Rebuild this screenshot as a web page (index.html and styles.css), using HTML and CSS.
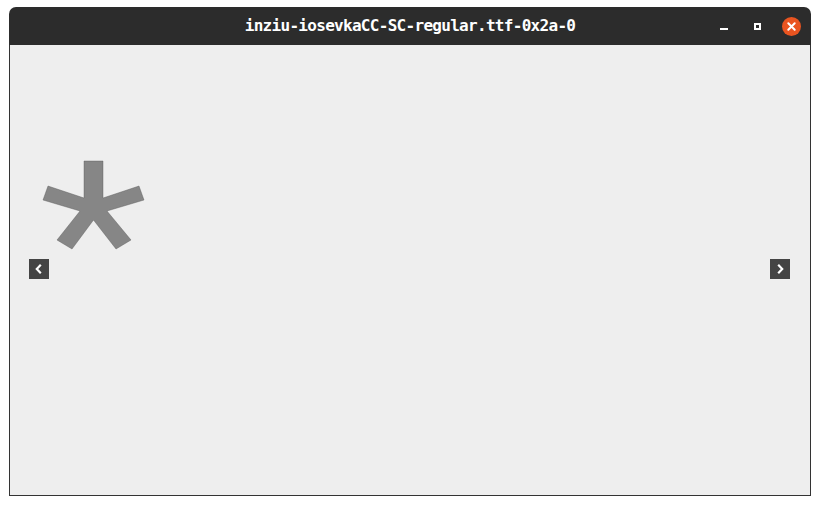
FILE: index.html
```html
<!DOCTYPE html>
<html>
<head>
<meta charset="utf-8">
<link rel="stylesheet" href="styles.css">
</head>
<body>
<div class="window">
  <div class="titlebar">
    <div class="title">inziu-iosevkaCC-SC-regular.ttf-0x2a-0</div>
    <div class="controls">
      <span class="btn-min"></span>
      <span class="btn-max"></span>
      <span class="btn-close">
        <svg width="19" height="19" viewBox="0 0 19 19"><circle cx="9.5" cy="9.5" r="9.5" fill="#e95420"/><path d="M6.3 6.3 L12.7 12.7 M12.7 6.3 L6.3 12.7" stroke="#fff" stroke-width="2" stroke-linecap="round"/></svg>
      </span>
    </div>
  </div>
  <div class="content">
    <svg class="glyph" width="800" height="450" viewBox="10 45 800 450">
      <polygon fill="#868686" stroke="#555" stroke-width="0.4" points="84,161 103,161 103,198 139,186 144,200 107,211 131,240 116,249 93.5,220 72,249 57,240 80,211 43,200 48,186 84,198"/>
    </svg>
    <button class="nav">
      <svg width="20" height="20" viewBox="0 0 20 20"><path d="M11.8 5.8 L7.8 10 L11.8 14.2" fill="none" stroke="#fff" stroke-width="2.2"/></svg>
    </button>
    <button class="nav">
      <svg width="20" height="20" viewBox="0 0 20 20"><path d="M8.2 5.8 L12.2 10 L8.2 14.2" fill="none" stroke="#fff" stroke-width="2.2"/></svg>
    </button>
  </div>
</div>
</body>
</html>
```
FILE: styles.css
```css
html, body {
  margin: 0;
  padding: 0;
  background: #ffffff;
}
.window {
  margin: 7px 0 0 9px;
  width: 802px;
  height: 489px;
  display: flex;
  flex-direction: column;
}
.titlebar {
  height: 38px;
  background: #2c2c2c;
  border-radius: 7px 7px 0 0;
  position: relative;
  display: flex;
  align-items: center;
  justify-content: center;
  flex-shrink: 0;
}
.title {
  color: #ffffff;
  font-family: "DejaVu Sans Mono", monospace;
  font-weight: bold;
  font-size: 16px;
  letter-spacing: -0.7px;
  margin-top: -1px;
}
.controls {
  position: absolute;
  right: 10px;
  top: 10px;
  display: flex;
  align-items: flex-start;
}
.btn-min {
  width: 8px;
  height: 2px;
  background: #fff;
  margin-top: 11px;
  margin-right: 26px;
}
.btn-max {
  width: 7px;
  height: 7px;
  box-sizing: border-box;
  border: 2px solid #fff;
  margin-right: 21px;
  margin-top: 6px;
}
.btn-close {
  width: 19px;
  height: 19px;
  display: block;
}
.btn-close svg { display: block; }
.content {
  flex: 1;
  background: #eeeeee;
  border: 1px solid #333333;
  border-top: none;
  position: relative;
  display: flex;
  align-items: center;
  justify-content: space-between;
  padding: 0 20px 0 19px;
}
.glyph {
  position: absolute;
  left: 0;
  top: 0;
}
.nav {
  position: relative;
  width: 20px;
  height: 20px;
  padding: 0;
  border: none;
  background: #444444;
  display: block;
  margin-top: -2px;
}
.nav svg { display: block; }
```
